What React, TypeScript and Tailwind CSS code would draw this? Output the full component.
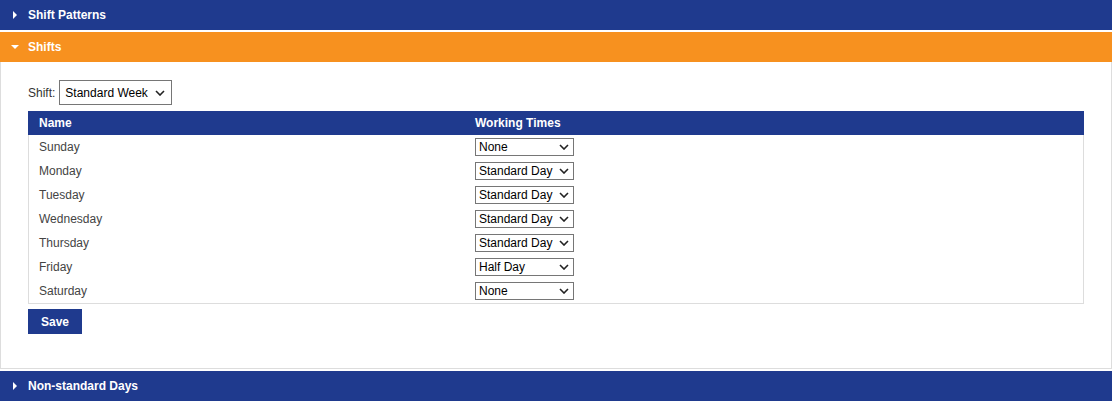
import React from "react";

const BLUE = "bg-[#1f3a8e]";

function Chevron() {
  return (
    <svg width="10" height="6" viewBox="0 0 10 6" className="shrink-0">
      <path d="M1 1 L5 5 L9 1" fill="none" stroke="#222" strokeWidth="1.6" />
    </svg>
  );
}

function FakeSelect({ value, className }: { value: string; className: string }) {
  return (
    <div className={`flex items-center justify-between border border-[#767676] bg-white text-[12px] text-black ${className}`}>
      <span className="leading-none">{value}</span>
      <Chevron />
    </div>
  );
}

function Header({ title, open, color }: { title: string; open?: boolean; color: string }) {
  return (
    <div className={`flex h-[30px] items-center ${color} text-white`}>
      <div className="flex w-[28px] justify-center">
        {open ? (
          <svg width="8" height="5" viewBox="0 0 8 5" className="ml-[2px]">
            <path d="M0 0 L8 0 L4 4 Z" fill="#fff" />
          </svg>
        ) : (
          <svg width="5" height="8" viewBox="0 0 5 8" className="ml-[3px]">
            <path d="M0 0 L4 4 L0 8 Z" fill="#fff" />
          </svg>
        )}
      </div>
      <span className="text-[12px] font-bold">{title}</span>
    </div>
  );
}

const rows: [string, string][] = [
  ["Sunday", "None"],
  ["Monday", "Standard Day"],
  ["Tuesday", "Standard Day"],
  ["Wednesday", "Standard Day"],
  ["Thursday", "Standard Day"],
  ["Friday", "Half Day"],
  ["Saturday", "None"],
];

export default function App() {
  return (
    <div className="w-[1112px] h-[401px] bg-white font-['Liberation_Sans',Arial,sans-serif] text-[12px]">
      <Header title="Shift Patterns" color={BLUE} />
      <div className="h-[2px]" />
      <Header title="Shifts" open color="bg-[#f7911f]" />
      <div className="border-x border-b border-[#dddddd] px-[27px] pt-[18px] pb-[34px] h-[307px]">
        <div className="flex items-center gap-[4px]">
          <span className="text-[#333]">Shift:</span>
          <FakeSelect value="Standard Week" className="h-[25px] w-[113px] pl-[5px] pr-[6px]" />
        </div>
        <div className="mt-[6px]">
          <div className={`grid grid-cols-[437px_1fr] h-[24px] items-center ${BLUE} text-white font-bold`}>
            <div className="pl-[11px]">Name</div>
            <div className="pl-[10px]">Working Times</div>
          </div>
          <div className="border-x border-b border-[#dddddd]">
            {rows.map(([day, val]) => (
              <div key={day} className="grid grid-cols-[436px_1fr] h-[24px] items-center text-[#444]">
                <div className="pl-[10px]">{day}</div>
                <div className="pl-[10px]">
                  <FakeSelect value={val} className="h-[18px] w-[99px] pl-[3px] pr-[4px]" />
                </div>
              </div>
            ))}
          </div>
        </div>
        <button className={`mt-[5px] h-[25px] w-[54px] ${BLUE} text-white font-bold text-[12px]`}>Save</button>
      </div>
      <div className="h-[2px]" />
      <Header title="Non-standard Days" color={BLUE} />
    </div>
  );
}
